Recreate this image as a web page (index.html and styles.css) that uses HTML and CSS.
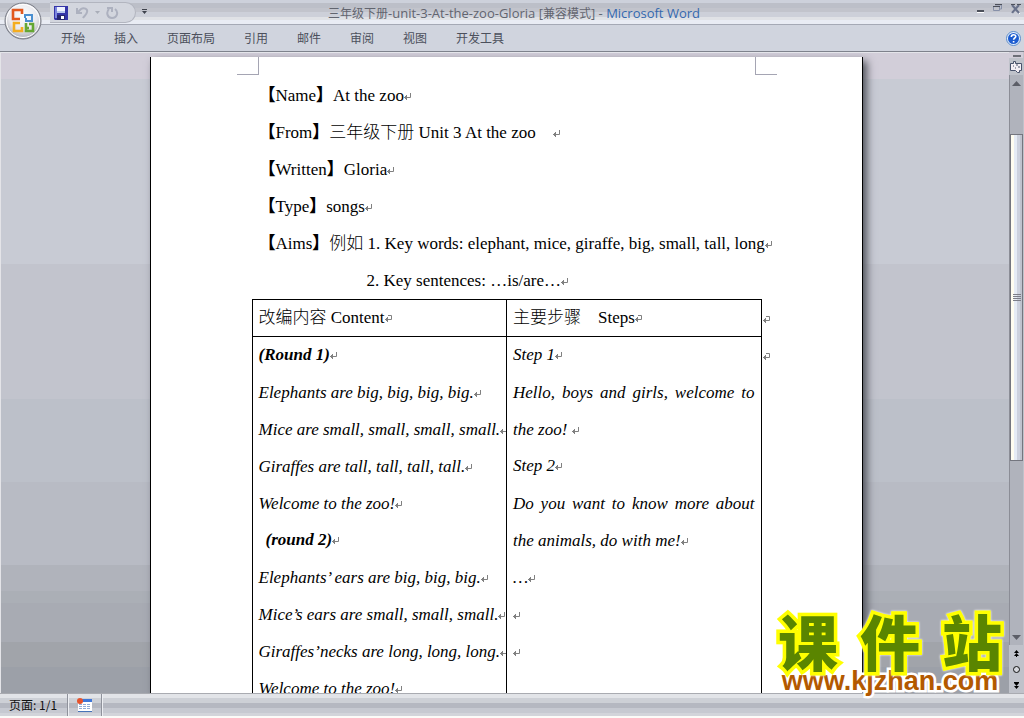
FILE: index.html
```html
<!DOCTYPE html>
<html lang="zh-CN">
<head>
<meta charset="utf-8">
<title>三年级下册-unit-3-At-the-zoo-Gloria</title>
<link rel="stylesheet" href="styles.css">
</head>
<body>
<svg class="defs" aria-hidden="true">
  <symbol id="ret" viewBox="0 0 7 7"><path d="M6.500 0v4.500H0M2.500 2v5M1.500 3v3" fill="none" stroke="#808080"/></symbol>
  <symbol id="cellret" viewBox="0 0 7 7"><path d="M3 .5h3.500v4H0M2.500 2v5M1.500 3v3" fill="none" stroke="#808080"/></symbol>
</svg>
<div class="app">
  <header class="titlebar">
    <div class="quick">
      <button class="tool" aria-label="保存"><svg width="14" height="14" viewBox="0 0 14 14"><path d="M0 0h14v14H1l-1-1z" fill="#3535a8"/><path d="M1 1h2v11H1z" fill="#7c86dd"/><path d="M3 1h8v6H3z" fill="#eef2ff"/><path d="M3 5h8v2H3z" fill="#b9c8ee"/><path d="M3 9h8v5H3z" fill="#26276f"/><path d="M7 10h3v3H7z" fill="#fff"/></svg></button>
      <button class="tool" aria-label="撤消"><svg width="13" height="12" viewBox="0 0 13 12"><path d="M1 1v5h5M2 5l3-3c3-2 7 0 6 3-.5 3-3 4-4 6" fill="none" stroke="#adb1bf" stroke-width="2"/></svg></button>
      <button class="tool drop" aria-label="撤消列表"><svg width="5" height="3" viewBox="0 0 5 3"><path d="M0 0h5L2.500 3z" fill="#a9adb8"/></svg></button>
      <button class="tool" aria-label="重复"><svg width="13" height="12" viewBox="0 0 13 12"><path d="M1 1h5v4M3 2C0 5 1 11 6 11s7-6 3-9" fill="none" stroke="#adb1bf" stroke-width="2"/></svg></button>
    </div>
    <button class="tool more" aria-label="自定义"><svg width="5" height="6" viewBox="0 0 5 6"><path d="M0 0h5v1H0zM0 2h5L2.500 5z" fill="#3f434d"/></svg></button>
    <h1 class="title">三年级下册<span class="latin">-unit-3-At-the-zoo-Gloria [</span>兼容模式<span class="latin">] - <span class="brand">Microsoft Word</span></span></h1>
    <div class="window">
      <button class="tool" aria-label="最小化"><svg width="7" height="12" viewBox="0 0 7 12"><path d="M0 10h7v1H0z" fill="#fff"/><path d="M0 8h7v2H0z" fill="#4c505a"/></svg></button>
      <button class="tool" aria-label="还原"><svg width="9" height="12" viewBox="0 0 9 12"><path d="M2 3h6.500v4H7M.5 4.500h6v4h-6z" fill="none" stroke="#8790a8"/><path d="M2 2h7v1H2zM0 4h7v1H0z" fill="#4c505a"/></svg></button>
      <button class="tool" aria-label="关闭"><svg width="10" height="12" viewBox="0 0 10 12"><path d="M1 12l4-4 4 4" fill="none" stroke="#fff"/><path d="M1 3l7 8M8 3l-7 8" stroke="#68718a" stroke-width="2"/><path d="M0 2h4v1H0zM6 2h4v1H6z" fill="#4c505a"/></svg></button>
    </div>
  </header>
  <nav class="tabs">
    <button>开始</button><button>插入</button><button>页面布局</button><button>引用</button><button>邮件</button><button>审阅</button><button>视图</button><button>开发工具</button>
    <button class="help" aria-label="帮助"><svg width="15" height="15" viewBox="0 0 15 15"><circle cx="7.500" cy="7.500" r="7" fill="#e6f0fc" stroke="#5b8bc9"/><circle cx="7.500" cy="7.500" r="5.500" fill="#1d5cd0"/><path d="M5.300 6c0-3 4.500-3 4.500-.5 0 1.500-2.200 1.500-2.200 3.200M7.600 10v1.600" fill="none" stroke="#fff" stroke-width="1.600"/></svg></button>
  </nav>
  <button class="orb" aria-label="Office 按钮"><svg width="38" height="38" viewBox="0 0 38 38">
    <defs><radialGradient id="g" cx=".5" cy=".35" r=".65"><stop offset="0" stop-color="#fff"/><stop offset=".6" stop-color="#e9e9ee"/><stop offset="1" stop-color="#a9abb3"/></radialGradient></defs>
    <circle cx="19" cy="19" r="18" fill="url(#g)" stroke="#777a84"/><circle cx="19" cy="19" r="16.500" fill="none" stroke="#fff"/>
    <g fill="none" stroke-width="2.600"><path d="M12 17H9V8h9v4M12 17h4" stroke="#e2581e"/><path d="M21 16v-3h7v6h-6v-3" stroke="#4b8fd0" stroke-width="2"/><path d="M16 21h-6v8h8v-4" stroke="#f4ad20"/><path d="M22 21v8h7v-7h-4M22 26h3" stroke="#65a733"/></g></svg></button>
  <main class="work">
    <div class="desk">
      <article class="page">
        <div class="corners"><i class="corner left"></i><i class="corner right"></i></div>
        <div class="body">
          <p><b class="br">【</b>Name<b class="br">】</b>At the zoo<svg class="m"><use href="#ret"/></svg></p>
          <p><b class="br">【</b>From<b class="br">】</b><span class="cjk">三年级下册</span> Unit 3 At the zoo<span class="cjk">　</span><svg class="m"><use href="#ret"/></svg></p>
          <p><b class="br">【</b>Written<b class="br">】</b>Gloria<svg class="m"><use href="#ret"/></svg></p>
          <p><b class="br">【</b>Type<b class="br">】</b>songs<svg class="m"><use href="#ret"/></svg></p>
          <p><b class="br">【</b>Aims<b class="br">】</b><span class="cjk">例如</span> 1. Key words: elephant, mice, giraffe, big, small, tall, long<svg class="m"><use href="#ret"/></svg></p>
          <p class="second">2. Key sentences: …is/are…<svg class="m"><use href="#ret"/></svg></p>
          <table class="plan">
            <thead><tr>
              <th><span class="cjk">改编内容</span> Content<svg class="m"><use href="#cellret"/></svg></th>
              <th><span class="cjk">主要步骤　</span>Steps<svg class="m"><use href="#cellret"/></svg></th>
              <td class="end"><svg class="m"><use href="#cellret"/></svg></td>
            </tr></thead>
            <tbody><tr>
              <td class="lyrics">
                <p class="head"><b>(Round 1)</b><svg class="m"><use href="#ret"/></svg></p>
                <p>Elephants are big, big, big, big.<svg class="m"><use href="#ret"/></svg></p>
                <p>Mice are small, small, small, small.<svg class="m"><use href="#ret"/></svg></p>
                <p>Giraffes are tall, tall, tall, tall.<svg class="m"><use href="#ret"/></svg></p>
                <p>Welcome to the zoo!<svg class="m"><use href="#ret"/></svg></p>
                <p class="head inset"><b>(round 2)</b><svg class="m"><use href="#ret"/></svg></p>
                <p>Elephants’ ears are big, big, big.<svg class="m"><use href="#ret"/></svg></p>
                <p>Mice’s ears are small, small, small.<svg class="m"><use href="#ret"/></svg></p>
                <p>Giraffes’necks are long, long, long.<svg class="m"><use href="#ret"/></svg></p>
                <p>Welcome to the zoo!<svg class="m"><use href="#ret"/></svg></p>
              </td>
              <td class="steps">
                <p class="head">Step 1<svg class="m"><use href="#ret"/></svg></p>
                <p>Hello, boys and girls, welcome to the zoo! <svg class="m"><use href="#ret"/></svg></p>
                <p class="head">Step 2<svg class="m"><use href="#ret"/></svg></p>
                <p>Do you want to know more about the animals, do with me!<svg class="m"><use href="#ret"/></svg></p>
                <p>…<svg class="m"><use href="#ret"/></svg></p>
                <p><svg class="m"><use href="#ret"/></svg></p>
                <p><svg class="m"><use href="#ret"/></svg></p>
              </td>
              <td class="end"><svg class="m"><use href="#cellret"/></svg></td>
            </tr></tbody>
          </table>
        </div>
      </article>
    </div>
    <aside class="scroll">
      <div class="split"></div>
      <button class="ruler" aria-label="标尺"><svg width="12" height="12" viewBox="0 0 12 12"><path d="M.5 2.500h3v-2h2v2h6v7h-2v2h-2l-2-2h-5z" fill="#f4eff5" stroke="#49536b"/><path d="M3 5h1M7 3v2M9 5v2M5 7h1" stroke="#49536b"/></svg></button>
      <button class="arrow" aria-label="向上"><svg width="9" height="5" viewBox="0 0 9 5"><path d="M4.500 0L9 5H0z" fill="#5c5e67"/></svg></button>
      <div class="track"><div class="thumb"><i></i><i></i><i></i><i></i></div></div>
      <button class="arrow" aria-label="向下"><svg width="9" height="5" viewBox="0 0 9 5"><path d="M0 0h9L4.500 5z" fill="#5c5e67"/></svg></button>
      <div class="browse">
        <button aria-label="前一页"><svg width="7" height="7" viewBox="0 0 7 7"><path d="M3.500 0L6 3H1zM3.500 3L6 6H1zM3 5h1v2H3z"/></svg></button>
        <button aria-label="选择浏览对象"><svg width="7" height="7" viewBox="0 0 7 7"><circle cx="3.500" cy="3.500" r="3" fill="#d5d7dd" stroke="#111"/></svg></button>
        <button aria-label="下一页"><svg width="7" height="7" viewBox="0 0 7 7"><path d="M3.500 4L6 1H1zM3.500 7L6 4H1zM1 0h5v1H1z"/></svg></button>
      </div>
    </aside>
  </main>
  <footer class="status">
    <button class="count">页面: 1/1</button>
    <button class="macro" aria-label="录制宏"><svg width="15" height="14" viewBox="0 0 15 14"><path d="M1 1h14v13H1z" fill="#fff"/><path d="M1 1h14v3H1z" fill="#3e76d8"/><path d="M2 6h3v1H2zM6 6h3v1H6zM10 6h3v1h-3zM2 8h3v1H2zM6 8h3v1H6zM10 8h3v1h-3zM2 10h3v1H2zM6 10h3v1H6zM10 10h3v1h-3z" fill="#91add8"/><path d="M1 13h14v1H1z" fill="#4774b8"/><circle cx="3" cy="3" r="3" fill="#e5532d"/></svg></button>
  </footer>
  <div class="mark">
    <div class="name"><span>课</span><span>件</span><span>站</span></div>
    <div class="site">www.kjzhan.com</div>
  </div>
</div>
</body>
</html>
```
FILE: styles.css
```css
* { box-sizing: border-box; }
body { margin: 0; font-family: "Liberation Serif", "Noto Sans CJK SC", serif; color: #000; }
button { border: 0; padding: 0; margin: 0; background: none; color: inherit; font: inherit; }
svg { display: block; flex: none; }
p { margin: 0; }
.defs { position: absolute; width: 0; height: 0; }
.app { position: relative; display: flex; flex-direction: column; height: 100vh; overflow: hidden; background: #d4d0c8; border-bottom: 2px solid #fbfbf8; }

.titlebar { flex: none; display: flex; height: 25px; border-bottom: 1px solid #a5a9b5; background: linear-gradient(#cdd1db 0 3px, #bcbfc8 3px 8px, #c2c4cc 8px 12px, #cdd0d9 12px 17px, #e0e2e6 17px 20px, #e9ecf4 20px); }
.quick { display: flex; align-items: center; gap: 8px; width: 86px; height: 21px; margin: 2px 0 0 50px; padding-left: 4px; border: 1px solid #b2b5bf; border-left: 0; border-radius: 0 11px 11px 0; background: #d3d6de; }
.tool { display: flex; align-items: center; justify-content: center; }
.drop { margin: 0 -2px; }
.more { width: 17px; }
.title { flex: 1; margin: 0; padding-right: 102px; text-align: center; white-space: nowrap; font: 12px/25px "Noto Sans CJK SC", sans-serif; color: #62656f; }
.latin { font-family: "Open Sans", sans-serif; font-size: 13px; }
.brand { color: #3468ae; }
.window { display: flex; gap: 9px; align-items: flex-start; width: 47px; padding-top: 2px; }

.tabs { flex: none; display: flex; gap: 29px; align-items: center; height: 27px; padding: 0 3px 0 61px; border-bottom: 1px solid #7e828c; background: #d0d4de; font: 12px/16px "Noto Sans CJK SC", sans-serif; color: #4c505c; }
.help { margin-left: auto; }
.orb { position: absolute; left: 4px; top: 2px; border-radius: 50%; }

.work { flex: 1; min-height: 0; display: flex; border-left: 1px solid #e4e4e8; }
.desk { flex: 1; min-width: 0; display: flex; justify-content: center; padding: 4px 0 0 2px; border-top: 1px solid #e4e5ea; overflow: hidden; background: linear-gradient(#d2ced9 0 4%, #c8cbd4 4% 33%, #c2c4cd 33% 54%, #bcc0c9 54% 67%, #b8bbc4 67% 80%, #b0b3bb 80% 84%, #abafb6 84% 86%, #a8abb3 86% 92%, #a1a4aa 92% 96%, #9ca0a8 96%); }
.page { width: 713px; border: solid #000; border-width: 0 1px; background: #fff; box-shadow: 4px 4px 8px #50535b; }
.corners { display: flex; justify-content: space-between; padding: 0 85px 0 86px; }
.corner { width: 22px; height: 18px; border-bottom: 1px solid #a5a5b3; }
.corner.left { border-right: 1px solid #a5a5b3; }
.corner.right { border-left: 1px solid #a5a5b3; }
.body { padding: 2px 106px 0 108px; font-size: 17px; line-height: 37px; white-space: nowrap; }
.cjk, .br { font-family: "Noto Sans CJK SC", sans-serif; font-size: 17px; font-weight: 300; line-height: 1; }
.br { font-weight: 900; }
.m { display: inline-block; width: 7px; height: 7px; vertical-align: 1px; }
.second { padding-left: 108px; }

.plan { width: 521px; margin-left: -7px; border-collapse: collapse; table-layout: fixed; }
.plan th, .plan td { height: 37px; padding: 0 6px; border: 1px solid #000; text-align: left; vertical-align: top; font-weight: 400; }
.plan th { line-height: 36px; }
.plan .end { width: 11px; padding: 0 0 0 1px; border: 0; }
.plan td.lyrics, .plan td.steps { font-style: italic; overflow: hidden; }
.head { margin-bottom: 1px; line-height: 36px; }
.inset { padding-left: 7px; }
.steps { white-space: normal; }
.steps p { text-align: justify; }

.scroll { flex: none; display: flex; flex-direction: column; width: 15px; padding-right: 1px; background: #bfc2ca; }
.split { height: 6px; margin: 0; border-top: 3px solid #d2ced9; border-bottom: 1px solid #d2ced9; background: linear-gradient(90deg, #d2ced9 4px, #6d6f78 4px 12px, #d2ced9 12px); }
.ruler { display: flex; justify-content: center; align-items: center; height: 17px; }
.arrow { display: flex; justify-content: center; align-items: center; height: 16px; border-left: 1px solid #8b8d96; background: #b0b3bc; }
.track { flex: 1; padding-top: 43px; border-left: 1px solid #8b8d96; background: #b0b3bc; }
.thumb { display: flex; flex-direction: column; justify-content: center; align-items: center; gap: 1px; height: 66%; border: 1px solid #74767f; background: linear-gradient(90deg, #fffdf0 3px, #e6ecf5 3px 6px, #cdd2de 6px 9px, #bfc3ce 9px); }
.thumb i { width: 8px; height: 1px; background: #7c7e88; }
.browse { display: flex; flex-direction: column; height: 48px; align-items: center; justify-content: space-around; }

.status { flex: none; display: flex; height: 23px; border-top: 1px solid #a9abb1; background: linear-gradient(#e2e4e8 0 4px, #cdd0d6 4px 9px, #b5b8c1 9px 14px, #c6c9d1 14px 19px, #d2d4da 19px); font: 12px/22px "Noto Sans CJK SC", sans-serif; color: #111; }
.status button { border-right: 1px solid #8f929b; box-shadow: 1px 0 #eceef2; }
.count { padding: 0 10px 0 9px; }
.macro { padding: 0 9px; }

.mark { position: absolute; right: 22px; bottom: 21px; width: 224px; }
.name, .site { paint-order: stroke fill; stroke-linejoin: round; }
.name { display: flex; justify-content: space-between; font: 900 60px/54px "Noto Sans CJK SC", sans-serif; color: #5a8500; -webkit-text-stroke: 7px #ff0; filter: drop-shadow(0 0 1px #fff); }
.site { font: bold 27px/28px "Liberation Sans", sans-serif; color: #b35900; -webkit-text-stroke: 5px #fff; text-align: center; }
```
